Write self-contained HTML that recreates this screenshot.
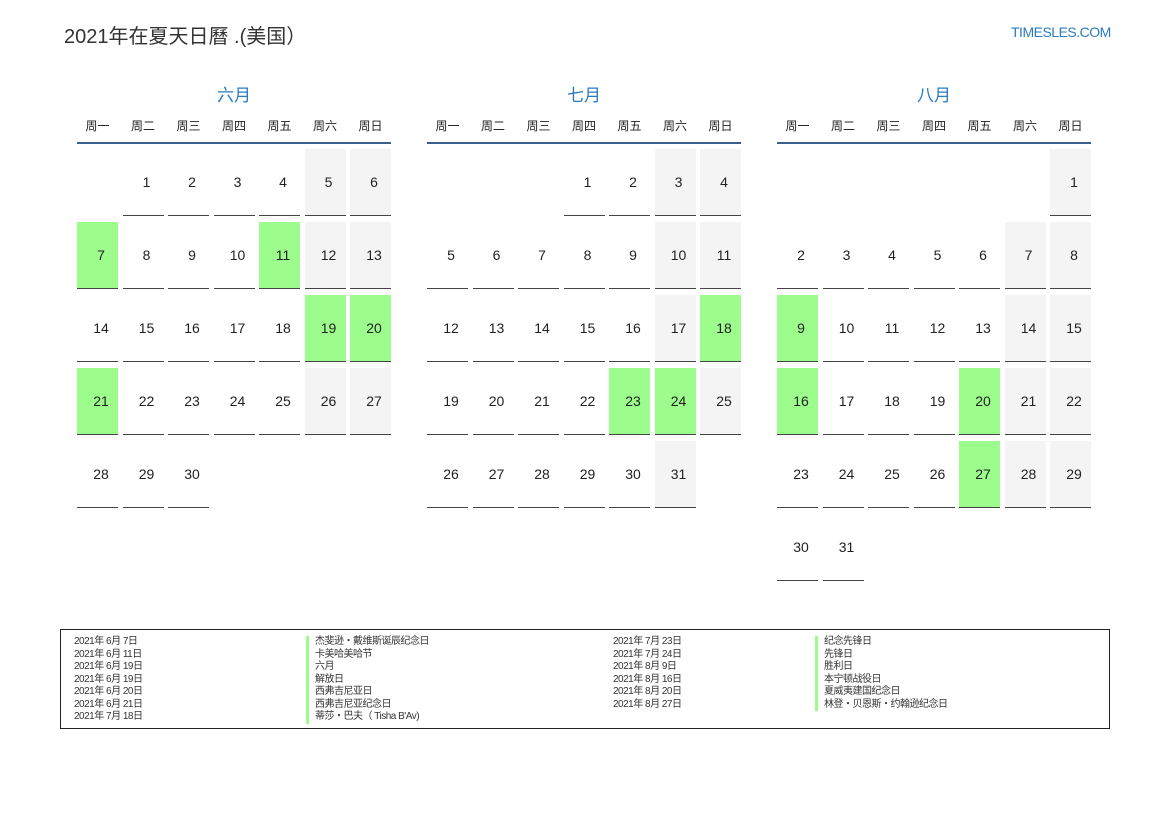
<!DOCTYPE html>
<html><head><meta charset="utf-8"><style>
body{margin:0;width:1169px;height:827px;background:#fff;position:relative;font-family:"Liberation Sans","Noto Sans CJK SC",sans-serif;color:#222;overflow:hidden}
.title{position:absolute;left:64px;top:20px;font-size:20px;color:#333}
.logo{position:absolute;left:1011px;top:24px;font-size:14px;color:#2a7ac0;letter-spacing:-0.5px}
.m{position:absolute;top:84px;width:314px}
.mt{text-align:center;font-size:17px;color:#2a7ac0;height:26px;line-height:24px}
.wd{display:grid;grid-template-columns:repeat(7,41px);column-gap:4.5px;font-size:12px;height:32px;line-height:32px;text-align:center;border-bottom:2px solid #3b5f8a}
.g{display:grid;grid-template-columns:repeat(7,41px);column-gap:4.5px;row-gap:6px;margin-top:5px}
.g div{height:67px;line-height:67px;text-align:center;font-size:14px;border-bottom:1px solid #444;box-sizing:border-box;padding-left:7px}
.g div.e{border-bottom:none}
.g div.w{background:#f4f4f4}
.g div.h{background:#9cfc8c}
.lg{position:absolute;left:60px;top:629px;width:1048px;height:98px;border:1px solid #222}
.lg div{position:absolute;font-size:10px;line-height:12.5px;color:#333;letter-spacing:-0.5px}
.bar{border-left:3px solid #9cfc8c;padding-left:6px}
</style></head><body>
<div class="title">2021年在夏天日曆 .(美国）</div>
<div class="logo">TIMESLES.COM</div>

<div class="m" style="left:77px"><div class="mt">六月</div>
<div class="wd"><span>周一</span><span>周二</span><span>周三</span><span>周四</span><span>周五</span><span>周六</span><span>周日</span></div>
<div class="g">
<div class="e"></div><div>1</div><div>2</div><div>3</div><div>4</div><div class="w">5</div><div class="w">6</div>
<div class="h">7</div><div>8</div><div>9</div><div>10</div><div class="h">11</div><div class="w">12</div><div class="w">13</div>
<div>14</div><div>15</div><div>16</div><div>17</div><div>18</div><div class="h">19</div><div class="h">20</div>
<div class="h">21</div><div>22</div><div>23</div><div>24</div><div>25</div><div class="w">26</div><div class="w">27</div>
<div>28</div><div>29</div><div>30</div>
</div></div>

<div class="m" style="left:427px"><div class="mt">七月</div>
<div class="wd"><span>周一</span><span>周二</span><span>周三</span><span>周四</span><span>周五</span><span>周六</span><span>周日</span></div>
<div class="g">
<div class="e"></div><div class="e"></div><div class="e"></div><div>1</div><div>2</div><div class="w">3</div><div class="w">4</div>
<div>5</div><div>6</div><div>7</div><div>8</div><div>9</div><div class="w">10</div><div class="w">11</div>
<div>12</div><div>13</div><div>14</div><div>15</div><div>16</div><div class="w">17</div><div class="h">18</div>
<div>19</div><div>20</div><div>21</div><div>22</div><div class="h">23</div><div class="h">24</div><div class="w">25</div>
<div>26</div><div>27</div><div>28</div><div>29</div><div>30</div><div class="w">31</div>
</div></div>

<div class="m" style="left:777px"><div class="mt">八月</div>
<div class="wd"><span>周一</span><span>周二</span><span>周三</span><span>周四</span><span>周五</span><span>周六</span><span>周日</span></div>
<div class="g">
<div class="e"></div><div class="e"></div><div class="e"></div><div class="e"></div><div class="e"></div><div class="e"></div><div class="w">1</div>
<div>2</div><div>3</div><div>4</div><div>5</div><div>6</div><div class="w">7</div><div class="w">8</div>
<div class="h">9</div><div>10</div><div>11</div><div>12</div><div>13</div><div class="w">14</div><div class="w">15</div>
<div class="h">16</div><div>17</div><div>18</div><div>19</div><div class="h">20</div><div class="w">21</div><div class="w">22</div>
<div>23</div><div>24</div><div>25</div><div>26</div><div class="h">27</div><div class="w">28</div><div class="w">29</div>
<div>30</div><div>31</div>
</div></div>

<div class="lg">
<div style="left:13px;top:6px">2021年 6月 7日<br>2021年 6月 11日<br>2021年 6月 19日<br>2021年 6月 19日<br>2021年 6月 20日<br>2021年 6月 21日<br>2021年 7月 18日</div>
<div style="left:245px;top:6px" class="bar">杰斐逊・戴维斯诞辰纪念日<br>卡美哈美哈节<br>六月<br>解放日<br>西弗吉尼亚日<br>西弗吉尼亚纪念日<br>蒂莎・巴夫（ Tisha B'Av)</div>
<div style="left:552px;top:6px">2021年 7月 23日<br>2021年 7月 24日<br>2021年 8月 9日<br>2021年 8月 16日<br>2021年 8月 20日<br>2021年 8月 27日</div>
<div style="left:754px;top:6px" class="bar">纪念先锋日<br>先锋日<br>胜利日<br>本宁顿战役日<br>夏威夷建国纪念日<br>林登・贝恩斯・约翰逊纪念日</div>
</div>
</body></html>
